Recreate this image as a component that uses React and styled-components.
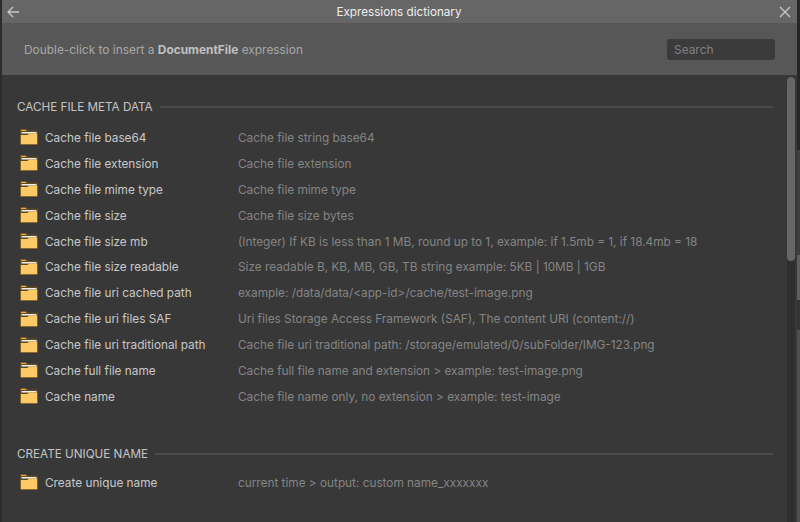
import React from 'react';
import styled, { createGlobalStyle } from 'styled-components';

const GlobalStyle = createGlobalStyle`
    html, body {
        margin: 0;
        padding: 0;
        background: #3a3a3a;
    }
    body {
        width: 800px;
        height: 522px;
        overflow: hidden;
        font-family: Inter, "Liberation Sans", sans-serif;
    }
`;

const Page = styled.div`
    display: flex;
    width: 800px;
    height: 522px;
    background: #2c2c2c;
`;

const Dialog = styled.div`
    width: 795px;
    margin-left: 2px;
    height: 522px;
    flex: none;
    display: flex;
    flex-direction: column;
    background: #383838;
`;

const BackdropEdge = styled.div`
    flex: 1;
    background: linear-gradient(
        #262626 0,
        #262626 150px,
        #3e3e3e 150px,
        #3e3e3e 255px,
        #5e5e5e 255px,
        #5e5e5e 300px,
        #343434 300px,
        #343434 330px,
        #505050 330px
    );
`;

const TitleBar = styled.div`
    height: 23px;
    flex: none;
    display: flex;
    align-items: center;
    justify-content: space-between;
    padding: 0 5px 0 4px;
    background: #666666;
`;

const Title = styled.div`
    font-size: 11.7px;
    color: #eeeeee;
`;

const IconButton = styled.div`
    width: 14px;
    height: 14px;
    display: flex;
    color: #c8c8c8;
`;

const InfoBar = styled.div`
    height: 52px;
    flex: none;
    display: flex;
    align-items: center;
    justify-content: space-between;
    padding: 0 22px 0 22px;
    background: #575757;
`;

const Hint = styled.div`
    font-size: 11.9px;
    color: #a8a8a8;

    b {
        font-weight: 700;
        color: #c0c0c0;
    }
`;

const Search = styled.div`
    width: 101px;
    height: 21px;
    padding-left: 7px;
    display: flex;
    align-items: center;
    background: #3b3b3b;
    border-radius: 3px;
    font-size: 11.9px;
    color: #808080;
`;

const Body = styled.div`
    flex: 1;
    display: flex;
    min-height: 0;
`;

const Content = styled.div`
    flex: 1;
    padding: 24px 14px 0 15px;
`;

const Section = styled.section`
    margin-bottom: 37px;
`;

const SectionHead = styled.div`
    display: flex;
    align-items: center;
    gap: 7px;
    height: 15px;
    margin-bottom: ${props => props.$gap}px;
    font-size: 11.7px;
    color: #c4c4c4;
    white-space: nowrap;

    &::after {
        content: '';
        flex: 1;
        height: 2px;
        background: #4a4a4a;
    }
`;

const Row = styled.div`
    display: flex;
    align-items: center;
    height: 25.9px;
    padding-left: 3px;
    white-space: nowrap;
`;

const Name = styled.div`
    display: flex;
    align-items: center;
    gap: 7px;
    width: 218px;
    flex: none;
    font-size: 11.8px;
    color: #c8c8c8;
`;

const Desc = styled.div`
    font-size: 11.8px;
    color: #858585;
`;

const ScrollTrack = styled.div`
    width: 8px;
    margin: 2px 2px 0 0;
    flex: none;
    background: #2f2f2f;
`;

const ScrollThumb = styled.div`
    height: 184px;
    background: #666666;
    border-radius: 4px;
`;

const FolderIcon = styled.svg`
    flex: none;
    margin-top: -1px;
`;

const Folder = () => (
    <FolderIcon width="18" height="16" viewBox="0 0 18 16">
        <path d="M0 3 V1 Q0 0 1 0 H6 L7.5 1.5 H17 Q18 1.5 18 2.5 V16 H0 Z" fill="#5e4a22" />
        <path d="M1 2 V1.2 Q1 0.8 1.4 0.8 H5.6 L6.8 2 Z" fill="#e3ad48" />
        <rect x="1.5" y="3" width="15" height="1.5" fill="#eeeeee" />
        <path d="M0.8 6 H7.5 L9 4.6 H17.2 V15.2 H0.8 Z" fill="#fdc964" />
    </FolderIcon>
);

const cacheRows = [
    ['Cache file base64', 'Cache file string base64'],
    ['Cache file extension', 'Cache file extension'],
    ['Cache file mime type', 'Cache file mime type'],
    ['Cache file size', 'Cache file size bytes'],
    ['Cache file size mb', '(Integer) If KB is less than 1 MB, round up to 1, example: if 1.5mb = 1, if 18.4mb = 18'],
    ['Cache file size readable', 'Size readable B, KB, MB, GB, TB string example: 5KB | 10MB | 1GB'],
    ['Cache file uri cached path', 'example: /data/data/<app-id>/cache/test-image.png'],
    ['Cache file uri files SAF', 'Uri files Storage Access Framework (SAF), The content URI (content://)'],
    ['Cache file uri traditional path', 'Cache file uri traditional path: /storage/emulated/0/subFolder/IMG-123.png'],
    ['Cache full file name', 'Cache full file name and extension > example: test-image.png'],
    ['Cache name', 'Cache file name only, no extension > example: test-image']
];

const uniqueRows = [['Create unique name', 'current time > output: custom name_xxxxxxx']];

const renderRows = rows =>
    rows.map(([name, desc]) => (
        <Row key={name}>
            <Name>
                <Folder />
                {name}
            </Name>
            <Desc>{desc}</Desc>
        </Row>
    ));

const App = () => (
    <Page>
        <GlobalStyle />
        <Dialog>
            <TitleBar>
                <IconButton>
                    <svg width="14" height="14" viewBox="0 0 14 14" fill="none" stroke="currentColor" strokeWidth="1.3">
                        <path d="M13 7 H2 M7 2 L2 7 L7 12" />
                    </svg>
                </IconButton>
                <Title>Expressions dictionary</Title>
                <IconButton>
                    <svg width="14" height="14" viewBox="0 0 14 14" fill="none" stroke="currentColor" strokeWidth="1.3">
                        <path d="M2 2 L12 12 M12 2 L2 12" />
                    </svg>
                </IconButton>
            </TitleBar>
            <InfoBar>
                <Hint>
                    Double-click to insert a <b>DocumentFile</b> expression
                </Hint>
                <Search>Search</Search>
            </InfoBar>
            <Body>
                <Content>
                    <Section>
                        <SectionHead $gap={11}>CACHE FILE META DATA</SectionHead>
                        {renderRows(cacheRows)}
                    </Section>
                    <Section>
                        <SectionHead $gap={8}>CREATE UNIQUE NAME</SectionHead>
                        {renderRows(uniqueRows)}
                    </Section>
                </Content>
                <ScrollTrack>
                    <ScrollThumb />
                </ScrollTrack>
            </Body>
        </Dialog>
        <BackdropEdge />
    </Page>
);

export default App;
